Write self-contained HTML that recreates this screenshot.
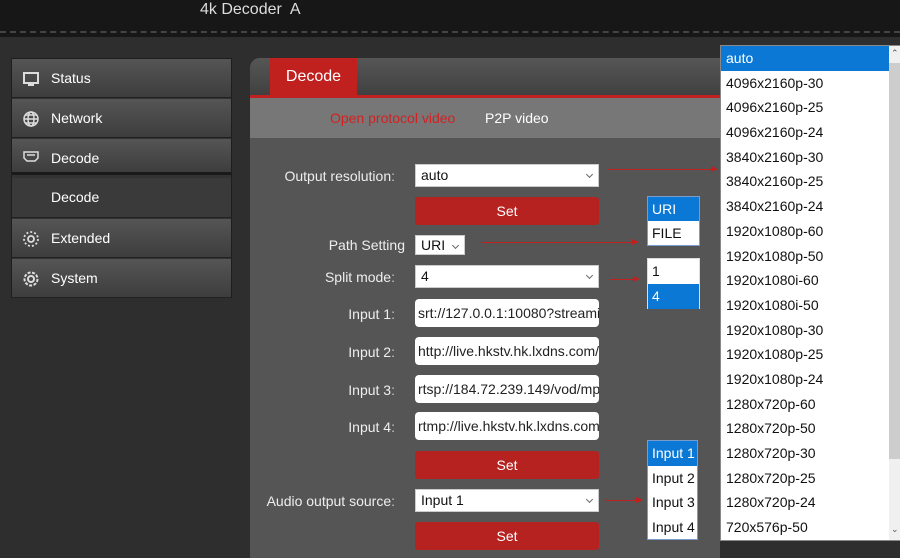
<!DOCTYPE html><html><head><style>
*{box-sizing:border-box;margin:0;padding:0}
body{width:900px;height:558px;overflow:hidden;background:#2e2e2e;font-family:"Liberation Sans",sans-serif;position:relative}
.a{position:absolute}
.hdr{left:0;top:0;width:900px;height:37px;background:#171717}
.dash{left:0;top:31px;width:900px;height:0;border-top:2px dashed #444}
.side{left:11px;top:58px;width:221px;height:240px;background:#333;border:1px solid #1e1e1e}
.it{position:absolute;left:0;width:219px;height:39px;background:linear-gradient(#555,#3d3d3d);color:#fff;font-size:14px;line-height:39px;padding-left:39px;border-bottom:1px solid #222}
.it svg{position:absolute;left:10px;top:11px}
.main{left:250px;top:58px;width:470px;height:500px;background:#555;border-radius:10px 0 0 0}
.tabbar{left:250px;top:58px;width:470px;height:38px;background:linear-gradient(#565656,#404040);border-radius:10px 0 0 0}
.tab{left:270px;top:58px;width:87px;height:38px;background:#c0201e;color:#fff;font-size:16px;line-height:38px;text-align:center}
.rl{left:250px;top:95px;width:470px;height:3px;background:#c0201e}
.sub{left:250px;top:98px;width:470px;height:40px;background:#777;font-size:14px;line-height:40px}
.lbl{color:#eee;font-size:14px;text-align:right;width:160px}
.sel{background:#fff;color:#111;font-size:14px;padding-left:5px;border:1px solid #ccc}
.sel:after{content:"";position:absolute;right:6px;top:7px;width:4px;height:4px;border-right:1px solid #666;border-bottom:1px solid #666;transform:rotate(45deg)}
.inp{background:#fff;border-radius:4px;font-size:14px;color:#222;padding-left:3px;overflow:hidden;white-space:nowrap;line-height:28px}
.btn{background:#b52220;border-radius:3px;color:#fff;font-size:14px;text-align:center;line-height:28px}
.arr{height:1px;background:#c0201e}
.arr:after{content:"";position:absolute;right:-2px;top:-3px;border-left:7px solid #c0201e;border-top:3.5px solid transparent;border-bottom:3.5px solid transparent}
.lst{background:#fff;border:1px solid #7a9ccc;font-size:14px;color:#111}
.lst div{padding-left:4px}
.on{background:#0a78d4;color:#fff}
.dd{left:720px;top:45px;width:180px;height:496px;background:#fff;border:1px solid #888;font-size:14px;color:#111}
.dd div.o{height:24.7px;line-height:24.7px;padding-left:5px;width:168px}
</style></head><body>
<div class="a hdr"></div><div class="a dash"></div>
<div class="a" style="left:200px;top:1px;color:#ddd;font-size:16px">4k Decoder&nbsp; A</div>
<div class="a side">
<div class="it" style="top:0"><svg width="18" height="18" viewBox="0 0 18 18"><rect x="2" y="3" width="14" height="10" fill="none" stroke="#ddd" stroke-width="2"/><rect x="6" y="14" width="6" height="2" fill="#ddd"/></svg>Status</div>
<div class="it" style="top:40px"><svg width="18" height="18" viewBox="0 0 18 18" fill="none" stroke="#ddd" stroke-width="1.5"><circle cx="9" cy="9" r="7"/><ellipse cx="9" cy="9" rx="3" ry="7"/><path d="M2 9h14M3 5h12M3 13h12"/></svg>Network</div>
<div class="it" style="top:80px;height:36px;line-height:38px;border-bottom:3px solid #1a1a1a"><svg width="18" height="18" viewBox="0 0 18 18" fill="none" stroke="#ddd" stroke-width="1.5" style="top:10px"><path d="M2 3h14v6l-3 3H5L2 9z"/><path d="M5 6h8"/></svg>Decode</div>
<div class="it" style="top:119px;height:40px;background:#3a3a3a">Decode</div>
<div class="it" style="top:160px"><svg width="18" height="18" viewBox="0 0 18 18" fill="none" stroke="#ddd" stroke-width="1.8"><circle cx="9" cy="9" r="3"/><circle cx="9" cy="9" r="7" stroke-dasharray="2 2"/></svg>Extended</div>
<div class="it" style="top:200px"><svg width="18" height="18" viewBox="0 0 18 18" fill="none" stroke="#ddd" stroke-width="2"><circle cx="9" cy="9" r="3"/><circle cx="9" cy="9" r="6.5" stroke-dasharray="3 1.5"/></svg>System</div>
</div>
<div class="a main"></div><div class="a tabbar"></div><div class="a tab">Decode</div><div class="a rl"></div>
<div class="a sub"><span class="a" style="left:80px;color:#d42020">Open protocol video</span><span class="a" style="left:235px;color:#fff">P2P video</span></div>
<div class="a lbl" style="left:235px;top:168px">Output resolution<span style="color:#ccc">:</span></div>
<div class="a sel" style="left:415px;top:164px;width:184px;height:23px;line-height:21px">auto</div>
<div class="a btn" style="left:415px;top:197px;width:184px;height:28px">Set</div>
<div class="a lbl" style="left:245px;top:237px">Path Setting</div>
<div class="a sel" style="left:415px;top:235px;width:50px;height:20px;line-height:18px">URI</div>
<div class="a lbl" style="left:235px;top:269px">Split mode<span style="color:#ccc">:</span></div>
<div class="a sel" style="left:415px;top:265px;width:184px;height:23px;line-height:21px">4</div>
<div class="a lbl" style="left:235px;top:306px">Input 1<span style="color:#ccc">:</span></div>
<div class="a inp" style="left:415px;top:299px;width:184px;height:28px">srt://127.0.0.1:10080?streamid</div>
<div class="a lbl" style="left:235px;top:344px">Input 2<span style="color:#ccc">:</span></div>
<div class="a inp" style="left:415px;top:337px;width:184px;height:28px">http://live.hkstv.hk.lxdns.com/</div>
<div class="a lbl" style="left:235px;top:382px">Input 3<span style="color:#ccc">:</span></div>
<div class="a inp" style="left:415px;top:375px;width:184px;height:28px">rtsp://184.72.239.149/vod/mp</div>
<div class="a lbl" style="left:235px;top:419px">Input 4<span style="color:#ccc">:</span></div>
<div class="a inp" style="left:415px;top:412px;width:184px;height:28px">rtmp://live.hkstv.hk.lxdns.com</div>
<div class="a btn" style="left:415px;top:451px;width:184px;height:28px">Set</div>
<div class="a lbl" style="left:235px;top:493px">Audio output source<span style="color:#ccc">:</span></div>
<div class="a sel" style="left:415px;top:489px;width:184px;height:23px;line-height:21px">Input 1</div>
<div class="a btn" style="left:415px;top:522px;width:184px;height:28px">Set</div>
<div class="a arr" style="left:608px;top:169px;width:108px"></div>
<div class="a arr" style="left:482px;top:242px;width:155px"></div>
<div class="a arr" style="left:610px;top:279px;width:28px"></div>
<div class="a arr" style="left:605px;top:500px;width:36px"></div>
<div class="a lst" style="left:647px;top:196px;width:53px;height:50px;line-height:24px"><div class="on">URI</div><div>FILE</div></div>
<div class="a lst" style="left:647px;top:258px;width:53px;height:51px;line-height:25px;border-color:#ddd"><div>1</div><div class="on">4</div></div>
<div class="a lst" style="left:647px;top:440px;width:51px;height:100px;line-height:24.7px"><div class="on">Input 1</div><div>Input 2</div><div>Input 3</div><div>Input 4</div></div>
<div class="a dd">
<div class="a" style="left:168px;top:0;width:11px;height:494px;background:#f0f0f0"></div>
<div class="a" style="left:168px;top:17px;width:11px;height:396px;background:#cdcdcd"></div>
<div class="a" style="left:170px;top:2px;font-size:9px;color:#555">&#8963;</div>
<div class="a" style="left:170px;top:478px;font-size:9px;color:#555">&#8964;</div>
<div class="o on">auto</div><div class="o">4096x2160p-30</div><div class="o">4096x2160p-25</div><div class="o">4096x2160p-24</div><div class="o">3840x2160p-30</div><div class="o">3840x2160p-25</div><div class="o">3840x2160p-24</div><div class="o">1920x1080p-60</div><div class="o">1920x1080p-50</div><div class="o">1920x1080i-60</div><div class="o">1920x1080i-50</div><div class="o">1920x1080p-30</div><div class="o">1920x1080p-25</div><div class="o">1920x1080p-24</div><div class="o">1280x720p-60</div><div class="o">1280x720p-50</div><div class="o">1280x720p-30</div><div class="o">1280x720p-25</div><div class="o">1280x720p-24</div><div class="o">720x576p-50</div>
</div>
</body></html>
